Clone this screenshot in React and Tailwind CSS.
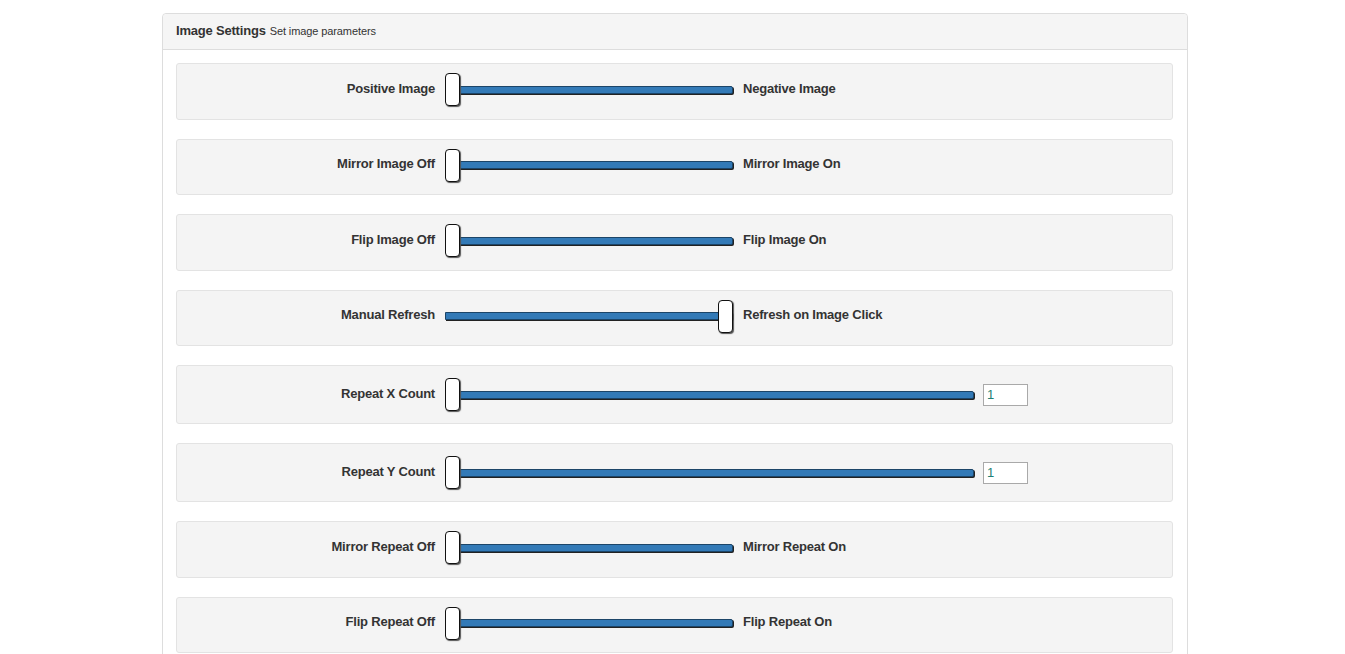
import React from "react";

const ROWS = [
  { left: "Positive Image", right: "Negative Image", pos: 0 },
  { left: "Mirror Image Off", right: "Mirror Image On", pos: 0 },
  { left: "Flip Image Off", right: "Flip Image On", pos: 0 },
  { left: "Manual Refresh", right: "Refresh on Image Click", pos: 1 },
  { left: "Repeat X Count", count: "1" },
  { left: "Repeat Y Count", count: "1" },
  { left: "Mirror Repeat Off", right: "Mirror Repeat On", pos: 0 },
  { left: "Flip Repeat Off", right: "Flip Repeat On", pos: 0 },
];

function Slider({ width, pos }) {
  return (
    <div className={`relative flex items-center h-[33px] ${width}`}>
      <div className="w-full h-[8px] bg-[#337ab7] border border-[#1c4568] rounded-r-[2px] shadow-[1px_1px_0_#222]" />
      <div
        className={`absolute top-0 h-[33px] w-[15px] bg-white border-[1.5px] border-[#111] rounded-[4px] shadow-[1px_1px_1px_#555] ${
          pos ? "right-0" : "left-0"
        }`}
      />
    </div>
  );
}

export default function App() {
  return (
    <div className="min-h-screen bg-white font-['Liberation_Sans',Arial,sans-serif] text-[#333]">
      <div className="ml-[162px] w-[1026px] mt-[13px] border border-[#dddddd] rounded-[4px]">
        <div className="h-[36px] flex items-center pb-[2px] px-[13px] bg-[#f5f5f5] border-b border-[#dddddd] rounded-t-[4px]">
          <span className="text-[13px] font-bold tracking-[-0.2px]">Image Settings</span>
          <span className="text-[11px] ml-[4px] mt-[1px] tracking-[-0.1px]">Set image parameters</span>
        </div>
        <div className="pt-[13px] pb-[20px] pl-[13px] pr-[14px] flex flex-col gap-[19px]">
          {ROWS.map((r) => (
            <div
              key={r.left}
              className={`flex items-start bg-[#f4f4f4] border border-[#e3e3e3] rounded-[3px] ${
                r.count ? "pt-[12px] pb-[12px]" : "pt-[9px] pb-[12.5px]"
              }`}
            >
              <div className="w-[258px] h-[33px] pb-[2px] flex items-center justify-end text-[13px] font-bold tracking-[-0.2px]">
                {r.left}
              </div>
              <div className="ml-[10px]">
                <Slider width={r.count ? "w-[529px]" : "w-[288px]"} pos={r.pos} />
              </div>
              {r.count ? (
                <div className="ml-[9px] h-[33px] flex items-center">
                  <input
                    readOnly
                    value={r.count}
                    className="w-[45px] h-[22px] border border-[#a9a9a9] bg-white px-[3px] text-[13px] text-[#1e7f74] outline-none"
                  />
                </div>
              ) : (
                <div className="ml-[10px] h-[33px] pb-[2px] flex items-center text-[13px] font-bold tracking-[-0.2px]">
                  {r.right}
                </div>
              )}
            </div>
          ))}
        </div>
      </div>
    </div>
  );
}
